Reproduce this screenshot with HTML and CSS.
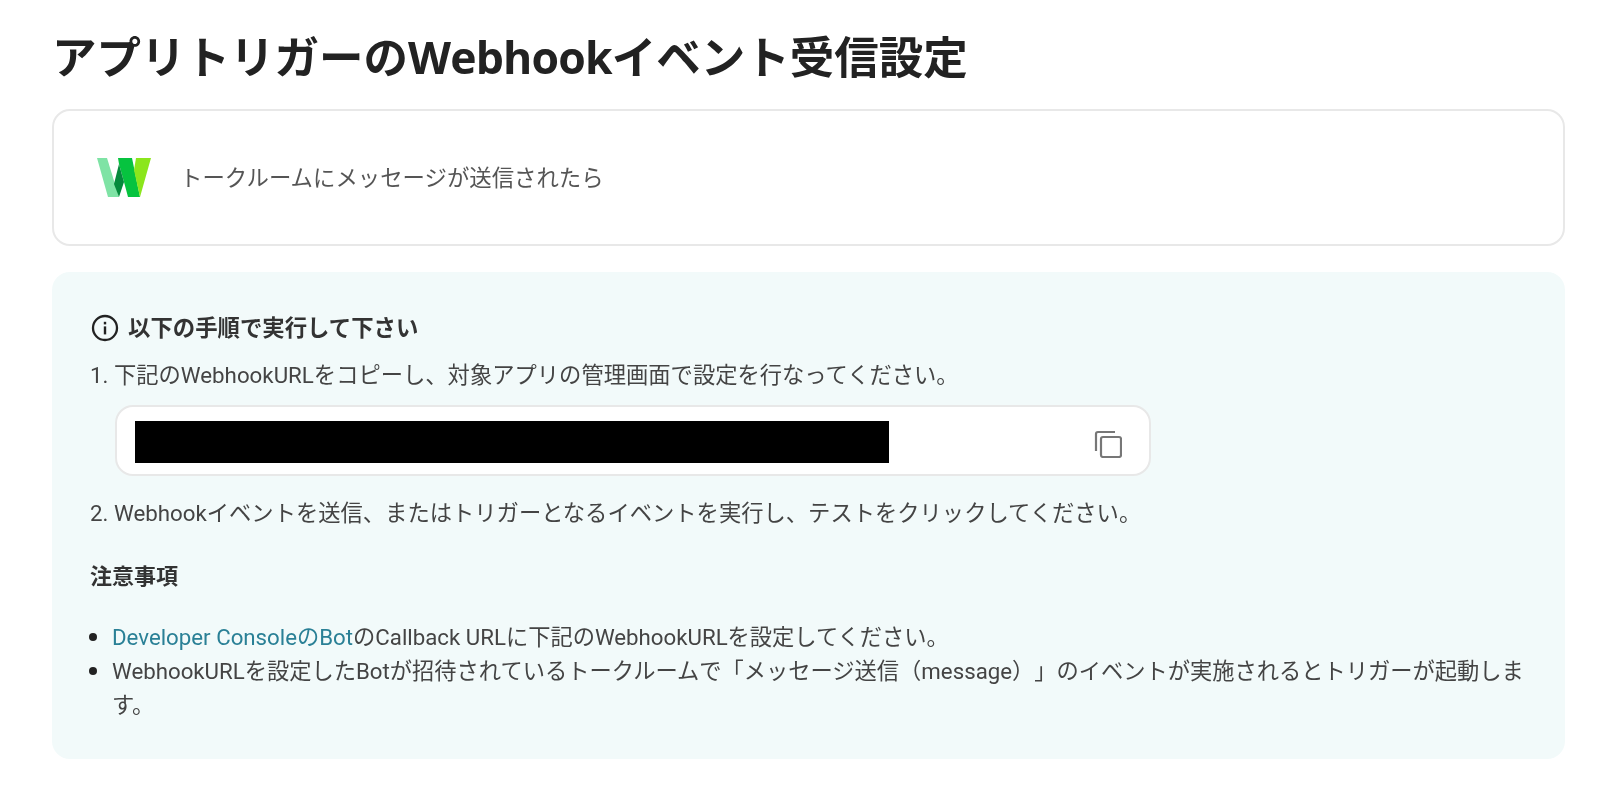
FILE: index.html
```html
<!DOCTYPE html>
<html lang="ja">
<head>
<meta charset="utf-8">
<title>アプリトリガーのWebhookイベント受信設定</title>
<link rel="stylesheet" href="styles.css">
</head>
<body>
<main class="page">
  <h1 class="title">アプリトリガーの<span class="title-latin">Webhook</span>イベント受信設定</h1>
  <section class="trigger-card">
    <svg class="logo" viewBox="0 0 54 39" width="54" height="39" aria-hidden="true">
      <polygon points="0,0 10,0 22,39 11,39" fill="#7fe3a5"/>
      <polygon points="21,0 35,0 43,39 31,39 27,24 22,6" fill="#06c33f"/>
      <polygon points="22,6 27,24 22,39 17,26" fill="#058a3c"/>
      <polygon points="39,0 54,0 43,39 37,12" fill="#8be61c"/>
    </svg>
    <p class="trigger-label">トークルームにメッセージが送信されたら</p>
  </section>
  <section class="panel">
    <h2 class="panel-head">
      <svg class="info" viewBox="0 0 28 28" width="28" height="28" aria-hidden="true">
        <circle cx="14" cy="14" r="12" fill="none" stroke="#222" stroke-width="2.3"/>
        <rect x="12.8" y="12.4" width="2.4" height="8" fill="#222"/>
        <rect x="12.8" y="7.8" width="2.4" height="2.6" fill="#222"/>
      </svg>
      以下の手順で実行して下さい
    </h2>
    <p class="step">1. 下記のWebhookURLをコピーし、対象アプリの管理画面で設定を行なってください。</p>
    <div class="url-box">
      <div class="redacted"></div>
      <svg class="copy" viewBox="0 0 28 28" width="28" height="28" aria-hidden="true">
        <path d="M2 21V4a2 2 0 0 1 2-2h17" fill="none" stroke="#777" stroke-width="2.2"/>
        <rect x="7" y="7" width="20" height="20" rx="2" fill="none" stroke="#777" stroke-width="2.2"/>
      </svg>
    </div>
    <p class="step step-two">2. Webhookイベントを送信、またはトリガーとなるイベントを実行し、テストをクリックしてください。</p>
    <h3 class="notes-head">注意事項</h3>
    <ul class="notes">
      <li><a class="link" href="#">Developer ConsoleのBot</a>のCallback URLに下記のWebhookURLを設定してください。</li>
      <li>WebhookURLを設定したBotが招待されているトークルームで「メッセージ送信（message）」のイベントが実施されるとトリガーが起動します。</li>
    </ul>
  </section>
</main>
</body>
</html>
```
FILE: styles.css
```css
* { box-sizing: border-box; }
html, body { margin: 0; background: #fff; }
body {
  font-family: Roboto, "Noto Sans CJK JP", sans-serif;
  color: #444;
  text-spacing-trim: space-all;
}
.page { padding: 27px 35px 0 52px; filter: blur(0.35px); }
.title {
  margin: 0 0 20px;
  font-size: 44.5px;
  line-height: 60px;
  font-weight: 700;
  color: #222;
}
.title-latin {
  font-family: "Open Sans", sans-serif;
  letter-spacing: -0.8px;
}
.trigger-card {
  height: 137px;
  display: flex;
  align-items: center;
  gap: 29px;
  padding-left: 43px;
  padding-bottom: 3px;
  border: 2px solid #e8e8e8;
  border-radius: 18px;
  margin-bottom: 26px;
}
.logo { flex: none; margin-top: 3px; }
.trigger-label { margin: 0; font-size: 22.4px; color: #555; }
.panel {
  height: 487px;
  background: #f2fafa;
  border-radius: 18px;
  padding: 40px 30px 0 38px;
}
.panel-head {
  display: flex;
  align-items: center;
  gap: 9px;
  margin: 0 0 15px;
  font-size: 22.4px;
  line-height: 32px;
  font-weight: 700;
  color: #333;
}
.info { flex: none; margin-left: 1px; }
.step { margin: 0; font-size: 22.3px; line-height: 32px; }
.url-box {
  width: 1036px;
  height: 71px;
  margin: 14px 0 21px 25px;
  display: flex;
  align-items: center;
  justify-content: space-between;
  padding: 2px 27px 0 18px;
  background: #fff;
  border: 2px solid #e8e8e8;
  border-radius: 18px;
}
.redacted { width: 754px; height: 42px; background: #000; }
.copy { flex: none; margin-top: 4px; }
.notes-head {
  margin: 32px 0 26.5px;
  font-size: 22px;
  line-height: 32px;
  font-weight: 700;
  color: #333;
}
.notes {
  margin: 0;
  padding-left: 22px;
  font-size: 22.25px;
  line-height: 33.7px;
}
.notes li::marker { font-size: 27px; color: #222; }
.link { color: #2a8096; text-decoration: none; }
```
